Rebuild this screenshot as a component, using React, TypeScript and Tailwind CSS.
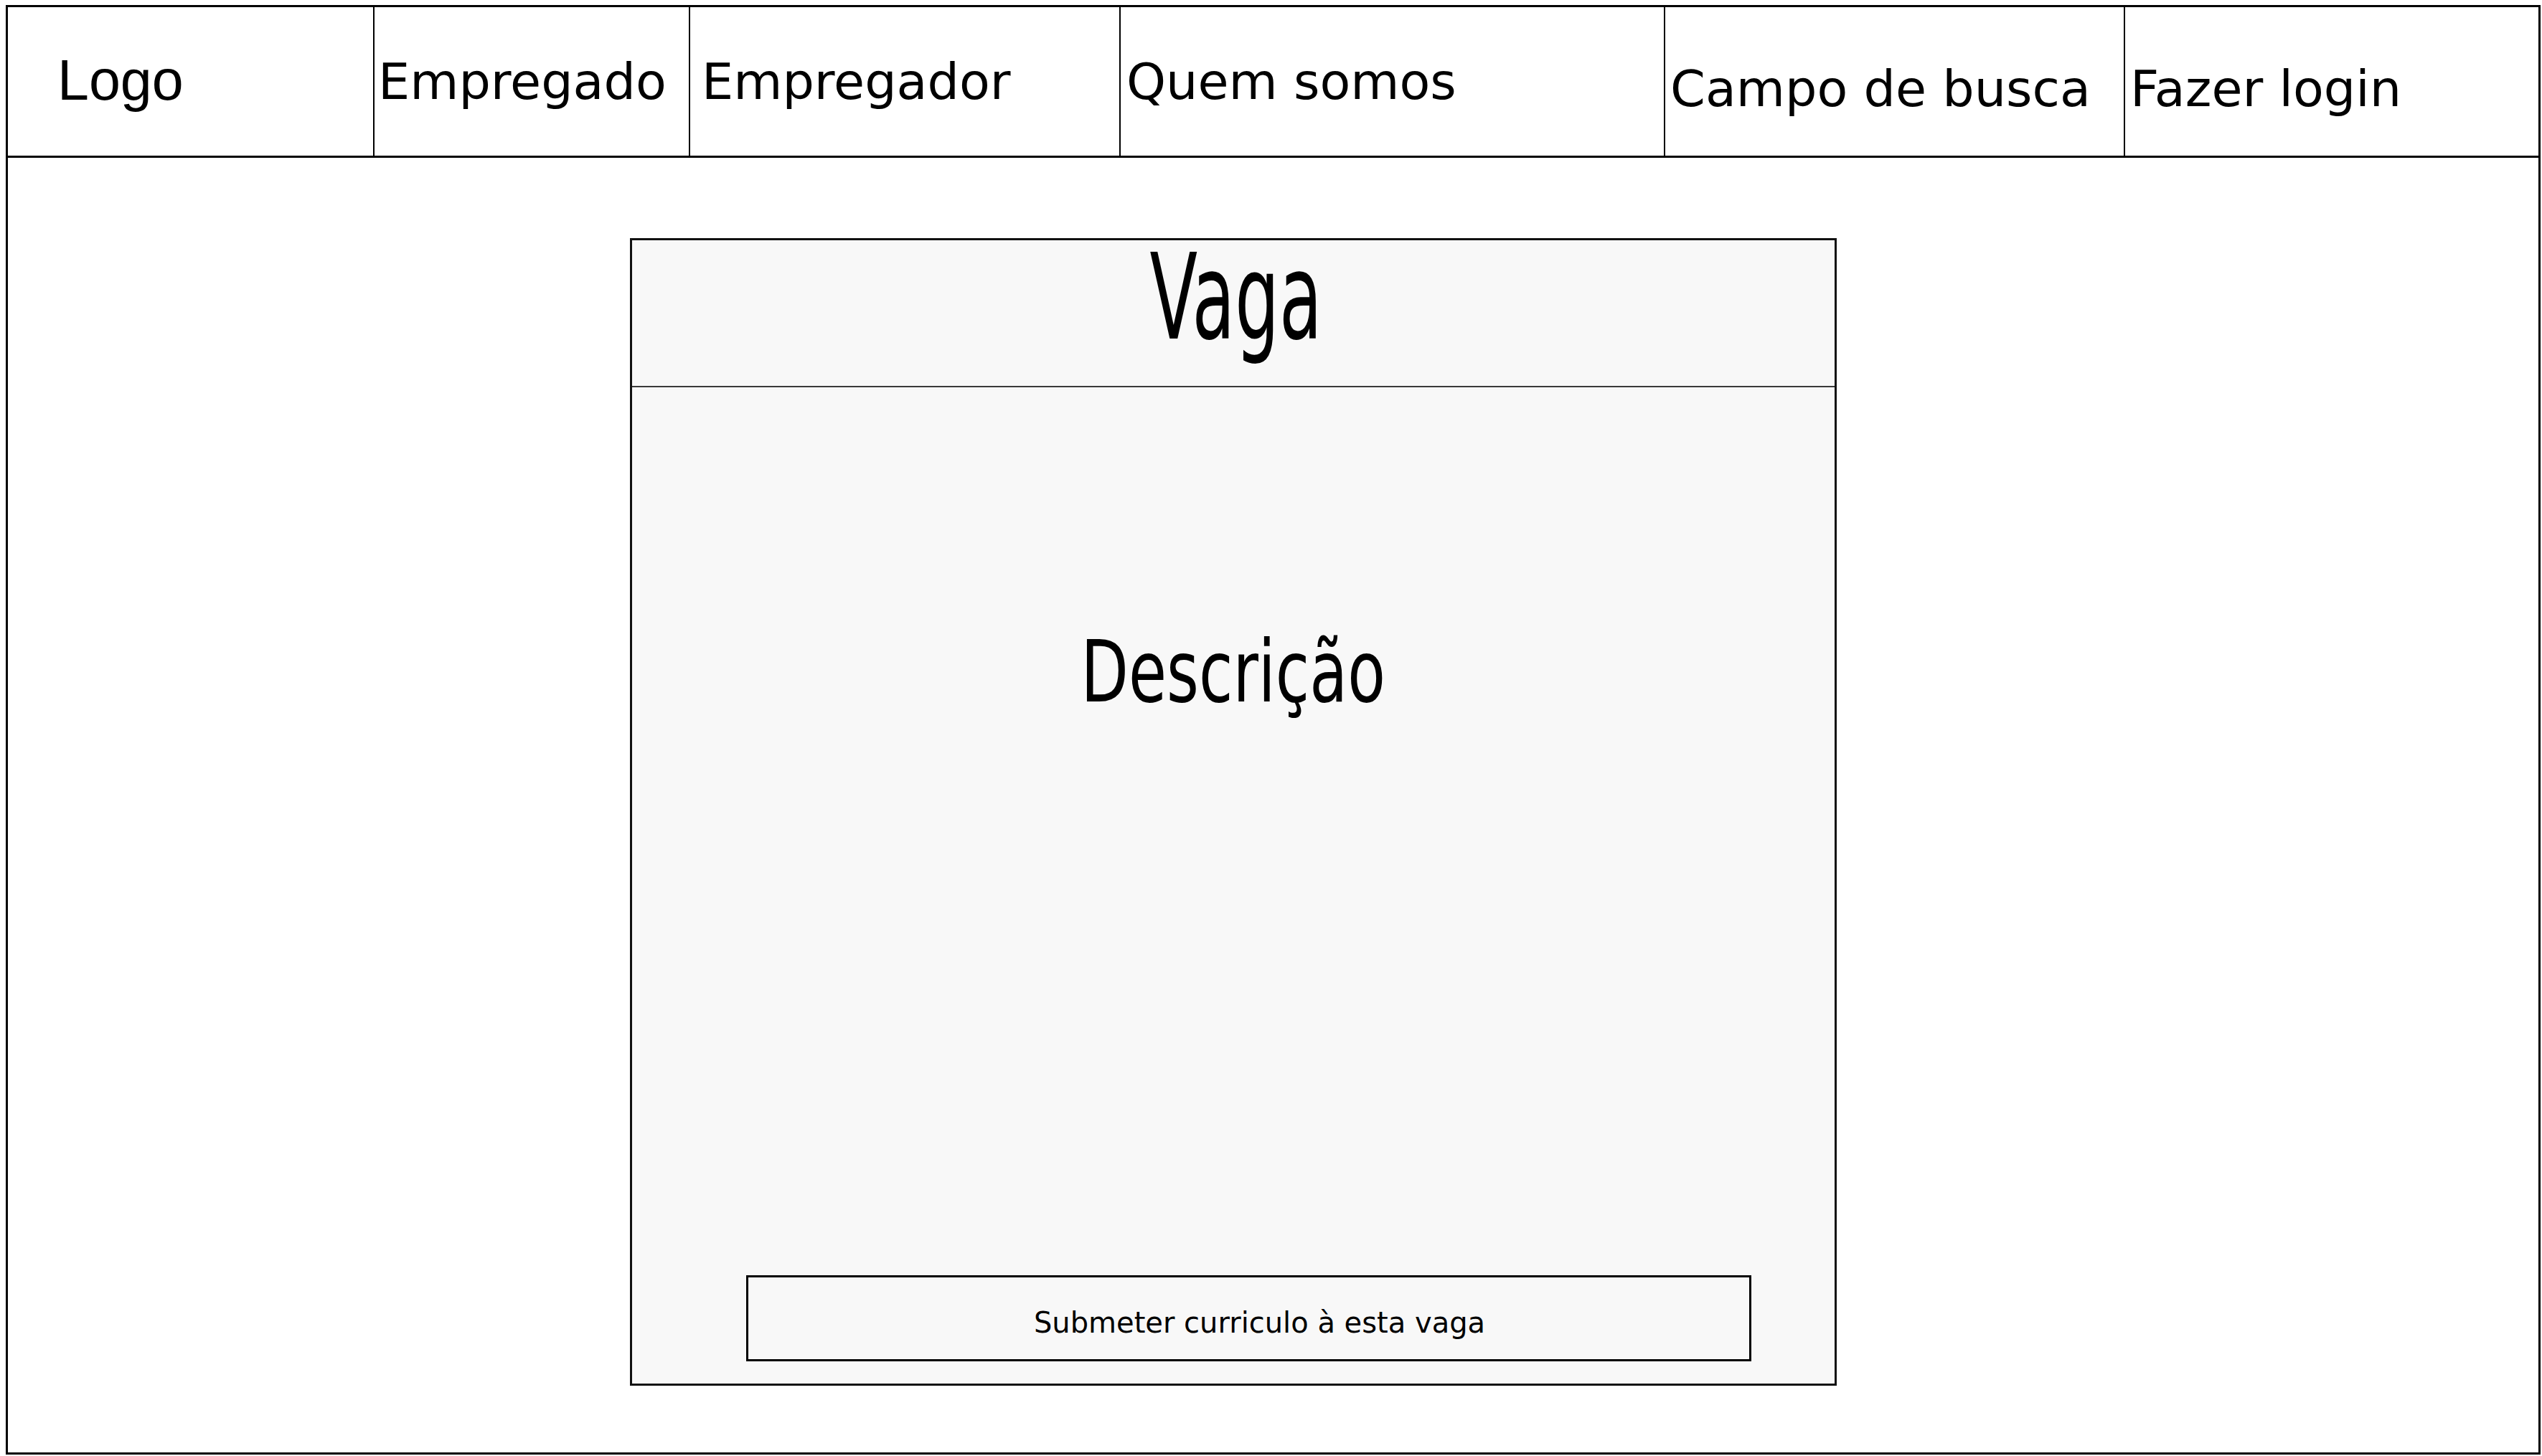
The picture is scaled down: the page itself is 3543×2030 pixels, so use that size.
function Header() {
  return (
    <header className="flex h-[210px] border-b-[3px] border-black font-['DejaVu_Sans',sans-serif] text-black">
      {/* Logo */}
      <div className="w-[509px] pl-[69px] pt-[62px]">
        <span className="font-['Liberation_Sans',Arial,sans-serif] text-[79px] leading-none">Logo</span>
      </div>

      {/* Navigation */}
      <div className="w-[440px] border-l-2 border-black pl-[5px] pt-[69px] text-[70px] leading-none">Empregado</div>
      <div className="w-[600px] border-l-2 border-black pl-[16px] pt-[69px] text-[70px] leading-none">Empregador</div>
      <div className="w-[759px] border-l-2 border-black pl-[8px] pt-[69px] text-[70px] leading-none">Quem somos</div>
      <div className="w-[641px] border-l-2 border-black pl-[7px] pt-[79px] text-[70px] leading-none">Campo de busca</div>
      <div className="flex-1 border-l-2 border-black pl-[7px] pt-[79px] text-[70px] leading-none">Fazer login</div>
    </header>
  )
}

function VagaCard() {
  return (
    <section className="ml-[867px] mt-[112px] flex h-[1600px] w-[1682px] flex-col border-[3px] border-[#111] bg-[#f8f8f8] font-['DejaVu_Sans',sans-serif] text-black">
      <div className="h-[205px] border-b-2 border-[#3a3a3a] pt-[5px] pl-[8px] text-center">
        <span className="inline-block scale-x-[0.59] text-[165px] leading-[150px]">Vaga</span>
      </div>

      <div className="flex flex-1 flex-col">
        <div className="pt-[338px] text-center">
          <span className="inline-block scale-x-[0.725] text-[119px] leading-none">Descrição</span>
        </div>

        <button className="mt-auto mb-[31px] ml-[159px] flex h-[120px] w-[1401px] items-center justify-center border-[3px] border-black bg-[#f8f8f8] pt-[12px] pl-[30px] text-[40px] leading-none">
          Submeter curriculo à esta vaga
        </button>
      </div>
    </section>
  )
}

export default function App() {
  return (
    <div className="h-[2030px] w-[3543px] bg-white pt-[7px] pl-[8px]">
      <div className="flex h-[2021px] w-[3533px] flex-col border-[3px] border-black">
        <Header />
        <VagaCard />
      </div>
    </div>
  )
}
